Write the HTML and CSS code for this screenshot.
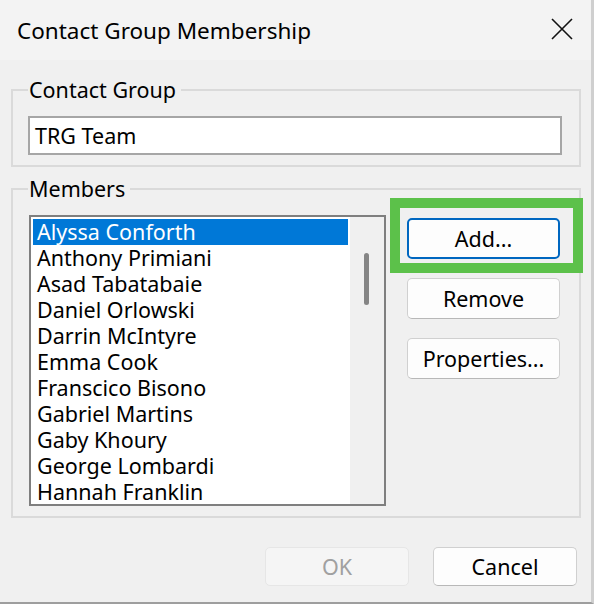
FILE: index.html
```html
<!DOCTYPE html>
<html>
<head>
<meta charset="utf-8">
<link rel="stylesheet" href="styles.css">
</head>
<body>
<div class="window">
  <div class="titlebar">
    <span class="title">Contact Group Membership</span>
    <span class="close">
      <svg width="22" height="22" viewBox="0 0 22 22"><path d="M1 1 L21 21 M21 1 L1 21" stroke="#111" stroke-width="1.6" fill="none"/></svg>
    </span>
  </div>
  <div class="content">
    <fieldset class="group group-name">
      <legend class="legend">Contact Group</legend>
      <div class="textbox">TRG Team</div>
    </fieldset>
    <fieldset class="group group-members">
      <legend class="legend">Members</legend>
      <div class="members-row">
        <div class="listbox">
          <div class="items">
            <div class="item selected">Alyssa Conforth</div>
            <div class="item">Anthony Primiani</div>
            <div class="item">Asad Tabatabaie</div>
            <div class="item">Daniel Orlowski</div>
            <div class="item">Darrin McIntyre</div>
            <div class="item">Emma Cook</div>
            <div class="item">Franscico Bisono</div>
            <div class="item">Gabriel Martins</div>
            <div class="item">Gaby Khoury</div>
            <div class="item">George Lombardi</div>
            <div class="item">Hannah Franklin</div>
          </div>
          <div class="scrollbar"><div class="thumb"></div></div>
        </div>
        <div class="side-buttons">
          <div class="add-wrap">
            <button class="btn btn-default">Add...</button>
            <div class="highlight"></div>
          </div>
          <button class="btn">Remove</button>
          <button class="btn">Properties...</button>
        </div>
      </div>
    </fieldset>
    <div class="footer">
      <button class="btn btn-footer btn-disabled">OK</button>
      <button class="btn btn-footer">Cancel</button>
    </div>
  </div>
</div>
</body>
</html>
```
FILE: styles.css
```css
* { box-sizing: border-box; }
html, body { margin: 0; padding: 0; }
body {
  width: 594px;
  height: 604px;
  overflow: hidden;
  background: #f0f0f0;
  font-family: "Noto Sans", "Open Sans", sans-serif;
  color: #000;
}
.window {
  width: 594px;
  height: 604px;
  background: #f0f0f0;
  border-right: 3px solid #cfcfcf;
  border-bottom: 2px solid #9e9e9e;
  position: relative;
}
.titlebar {
  height: 60px;
  background: #f3f3f3;
  display: flex;
  align-items: center;
  justify-content: space-between;
  padding: 0 0 0 17px;
}
.title {
  font-size: 22.5px;
  line-height: 26px;
  margin-top: 1px;
}
.close {
  width: 22px;
  height: 22px;
  margin-right: 18px;
  margin-top: -2px;
  display: flex;
}
.content {
  padding-left: 11px;
}
.group {
  margin: 0;
  width: 570px;
  min-width: 0;
  border: 2px solid #dadada;
}
.legend {
  font-size: 21.5px;
  line-height: 24px;
  padding: 0 5px 0 1px;
}
.group-name {
  margin-top: 18px;
  padding: 14px 17px 10px 15px;
}
.group-members {
  margin-top: 10px;
  padding: 14px 19px 10px 16px;
}
.group-members .legend {
  margin-left: -1px;
}
.textbox {
  height: 39px;
  background: #fff;
  border: 2px solid #a6a6a6;
  padding-left: 5px;
  font-size: 21.5px;
  line-height: 35px;
}
.members-row {
  display: flex;
  gap: 21px;
}
.listbox {
  width: 357px;
  height: 291px;
  border: 2px solid #7f7f7f;
  background: #fff;
  display: flex;
  overflow: hidden;
}
.items {
  width: 319px;
  padding: 2px 2px 0 2px;
  overflow: hidden;
}
.item {
  height: 26px;
  line-height: 26px;
  font-size: 21.5px;
  padding-left: 4px;
  white-space: nowrap;
}
.item.selected {
  background: #0078d7;
  color: #fff;
}
.scrollbar {
  flex: 1;
  background: #f0f0f0;
  padding-top: 36px;
  padding-left: 14px;
}
.thumb {
  width: 5px;
  height: 52px;
  background: #858585;
  border-radius: 3px;
}
.side-buttons {
  width: 153px;
  margin-top: 3px;
  display: flex;
  flex-direction: column;
  gap: 19px;
}
.add-wrap {
  position: relative;
}
.btn {
  font-family: "Noto Sans", "Open Sans", sans-serif;
  font-size: 21.5px;
  color: #000;
  width: 153px;
  height: 41px;
  background: #fdfdfd;
  border: 1px solid #d0d0d0;
  border-bottom-color: #b8b8b8;
  border-radius: 5px;
  padding: 0;
  line-height: 36px;
  display: block;
}
.btn-default {
  border: 2px solid #0067c0;
}
.highlight {
  position: absolute;
  left: -17px;
  right: -23px;
  top: -20px;
  bottom: -14px;
  border: 10px solid #5cc14a;
}
.footer {
  margin-top: 29px;
  display: flex;
  justify-content: flex-end;
  gap: 24px;
  padding-right: 14px;
}
.btn-footer {
  width: 144px;
  height: 39px;
  line-height: 34px;
}
.btn-disabled {
  background: #f5f5f5;
  border: 1px solid #e6e6e6;
  color: #a0a0a0;
}
```
